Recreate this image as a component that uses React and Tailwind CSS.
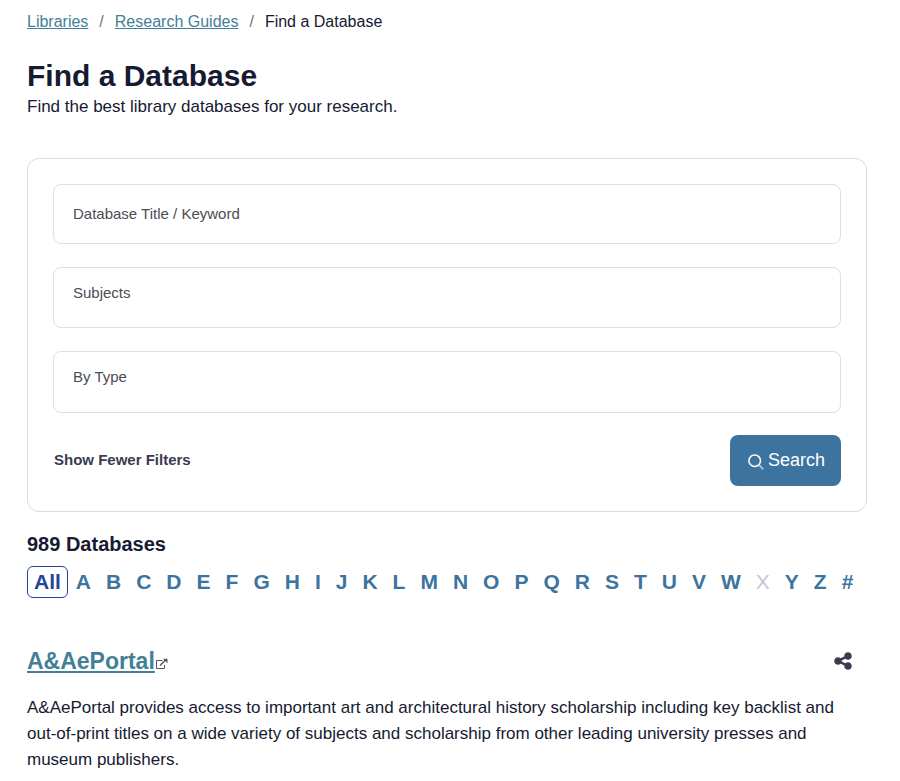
import { FaShareNodes } from "react-icons/fa6";

const letters = "ABCDEFGHIJKLMNOPQRSTUVWXYZ#".split("");

function Field({ id, label, className }) {
  return (
    <div className={`flex items-center gap-3 rounded-lg border border-[#dedfe8] px-[19px] focus-within:border-[#3c749f] ${className}`}>
      <label htmlFor={id} className="text-[15px] leading-5 text-[#4b4d55]">{label}</label>
      <input id={id} type="text" className="min-w-0 flex-1 bg-transparent text-[15px] leading-5 outline-none" />
    </div>
  );
}

function Breadcrumb() {
  return (
    <nav aria-label="Breadcrumb">
      <ol className="flex flex-wrap gap-[11px] text-base leading-6">
        <li><a href="#libraries" className="text-[#437f96] underline">Libraries</a></li>
        <li aria-hidden="true" className="text-[#6c757d]">/</li>
        <li><a href="#guides" className="text-[#437f96] underline">Research Guides</a></li>
        <li aria-hidden="true" className="text-[#6c757d]">/</li>
        <li aria-current="page">Find a Database</li>
      </ol>
    </nav>
  );
}

function SearchIcon() {
  return (
    <svg className="mt-1" width="16" height="16" viewBox="0 0 16 16" fill="none" stroke="currentColor" aria-hidden="true">
      <circle cx="6.7" cy="6.7" r="5.8" strokeWidth="1.5" />
      <path d="M11 11 15.3 15.3" strokeWidth="1.9" opacity="0.55" />
    </svg>
  );
}

function ExternalIcon() {
  return (
    <svg width="12" height="12" viewBox="0 0 12 12" fill="none" stroke="currentColor" aria-hidden="true">
      <path d="M6.5 2.5H0.5v8h8V7" />
      <path d="M4 7.5 9.5 2" strokeWidth="1.4" />
      <path d="M7 0.8h4.5v4.5z" fill="currentColor" stroke="none" />
    </svg>
  );
}

export default function App() {
  return (
    <main className="bg-white pt-[10px] pr-[33px] pb-2 pl-[27px] font-['Liberation_Sans',Arial,sans-serif] text-[#161a32]">
      <Breadcrumb />
      <header className="mt-6">
        <h1 className="text-[30px] leading-9 font-bold">Find a Database</h1>
        <p className="text-[17px] leading-[26px]">Find the best library databases for your research.</p>
      </header>

      <form className="mt-[38px] rounded-xl border border-[#dcdcde] p-[25px]" onSubmit={(e) => e.preventDefault()}>
        <div className="flex flex-col gap-[23px]">
          <Field id="keyword" label="Database Title / Keyword" className="h-[60px]" />
          <Field id="subjects" label="Subjects" className="h-[61px] pb-[10px]" />
          <Field id="type" label="By Type" className="h-[62px] pb-[10px]" />
        </div>
        <div className="mt-[22px] flex items-center justify-between">
          <button type="button" className="pb-0.5 pl-px text-[15px] leading-5 font-bold text-[#3b3a52]">Show Fewer Filters</button>
          <button type="submit" className="flex h-[51px] items-center gap-1 rounded-lg bg-[#3c749f] pr-4 pb-0.5 pl-[18px] text-lg text-white">
            <SearchIcon />
            Search
          </button>
        </div>
      </form>

      <h2 className="mt-5 text-xl leading-6 font-bold">989 Databases</h2>
      <nav aria-label="Filter by letter" className="mt-[10px] flex flex-wrap gap-px text-[21px] leading-[30px] font-bold text-[#3c749f]">
        <a href="#all" aria-current="true" className="rounded-md border border-[#24449b] px-[6px] text-[#24449b]">All</a>
        {letters.map((l) =>
          l === "X" ? (
            <span key={l} className="border border-transparent px-[6px] font-normal text-[#c6c6d2]">{l}</span>
          ) : (
            <a key={l} href={`#letter-${l}`} className="border border-transparent px-[6px]">{l}</a>
          )
        )}
      </nav>

      <article className="mt-12">
        <div className="flex items-center justify-between pr-[14px]">
          <h3 className="flex items-center gap-px text-[23px] leading-[30px] font-bold text-[#437f96]">
            <a href="#portal" className="underline">A&amp;AePortal</a>
            <span className="pt-[6px] text-[#55565c]"><ExternalIcon /></span>
          </h3>
          <button type="button" aria-label="Share" className="text-xl text-[#3b3a52]"><FaShareNodes /></button>
        </div>
        <p className="mt-[19px] text-[17px] leading-[26px]">
          A&amp;AePortal provides access to important art and architectural history scholarship including key backlist and
          out-of-print titles on a wide variety of subjects and scholarship from other leading university presses and museum
          publishers.
        </p>
      </article>
    </main>
  );
}
